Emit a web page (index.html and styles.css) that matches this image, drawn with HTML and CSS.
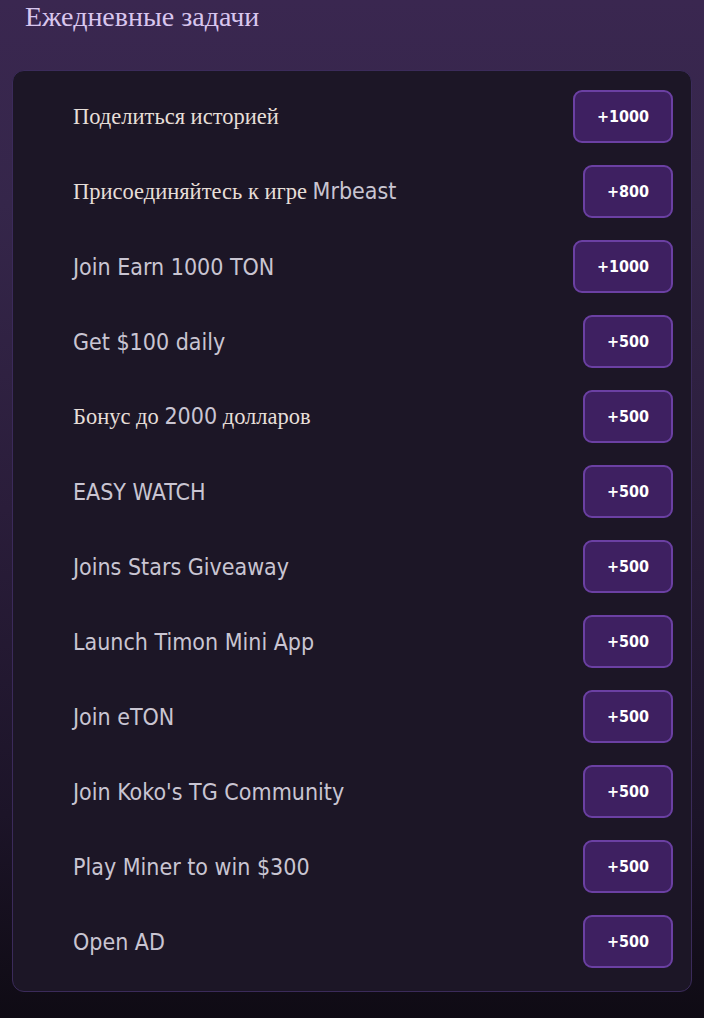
FILE: index.html
```html
<!DOCTYPE html>
<html lang="ru">
<head>
<meta charset="utf-8">
<title>Ежедневные задачи</title>
<link rel="stylesheet" href="styles.css">
</head>
<body>
<div class="page">
  <h1 class="title">Ежедневные задачи</h1>
  <div class="card">
    <div class="row"><span class="label ru">Поделиться историей</span><button class="reward">+1000</button></div>
    <div class="row"><span class="label"><span class="ru">Присоединяйтесь к игре </span>Mrbeast</span><button class="reward">+800</button></div>
    <div class="row"><span class="label">Join Earn 1000 TON</span><button class="reward">+1000</button></div>
    <div class="row"><span class="label">Get $100 daily</span><button class="reward">+500</button></div>
    <div class="row"><span class="label"><span class="ru">Бонус до </span>2000<span class="ru"> долларов</span></span><button class="reward">+500</button></div>
    <div class="row"><span class="label">EASY WATCH</span><button class="reward">+500</button></div>
    <div class="row"><span class="label">Joins Stars Giveaway</span><button class="reward">+500</button></div>
    <div class="row"><span class="label">Launch Timon Mini App</span><button class="reward">+500</button></div>
    <div class="row"><span class="label">Join eTON</span><button class="reward">+500</button></div>
    <div class="row"><span class="label">Join Koko's TG Community</span><button class="reward">+500</button></div>
    <div class="row"><span class="label">Play Miner to win $300</span><button class="reward">+500</button></div>
    <div class="row"><span class="label">Open AD</span><button class="reward">+500</button></div>
  </div>
</div>
</body>
</html>
```
FILE: styles.css
```css
html, body {
  margin: 0;
  padding: 0;
}
body {
  width: 704px;
  height: 1018px;
  overflow: hidden;
  background: linear-gradient(180deg, #3a2750 0%, #35264a 20%, #2a1d3a 50%, #1c1428 80%, #0f0b14 100%);
  font-family: "DejaVu Sans Condensed", "DejaVu Sans", sans-serif;
}
.page {
  padding: 0 12px 0 12px;
}
.title {
  margin: 0;
  padding: 0 0 0 13px;
  height: 70px;
  font-family: "Liberation Serif", serif;
  font-weight: normal;
  font-size: 28px;
  line-height: 34px;
  color: #d8c6ee;
}
.card {
  background: #1c1626;
  border: 1px solid #3b2b5a;
  border-radius: 12px;
  padding: 19px 18px 23px 60px;
  display: flex;
  flex-direction: column;
  gap: 22px;
}
.row {
  display: flex;
  align-items: center;
  justify-content: space-between;
  height: 53px;
}
.label {
  font-size: 23px;
  color: #c9c5d2;
  letter-spacing: 0;
}
.ru {
  font-family: "Liberation Serif", serif;
  font-size: 22.5px;
  color: #e6ded8;
}
.reward {
  height: 53px;
  padding: 0 22px;
  background: #3e2061;
  border: 2px solid #6b40a3;
  border-radius: 9px;
  color: #ffffff;
  font-family: "DejaVu Sans Condensed", "DejaVu Sans", sans-serif;
  font-weight: bold;
  font-size: 16px;
}
```
